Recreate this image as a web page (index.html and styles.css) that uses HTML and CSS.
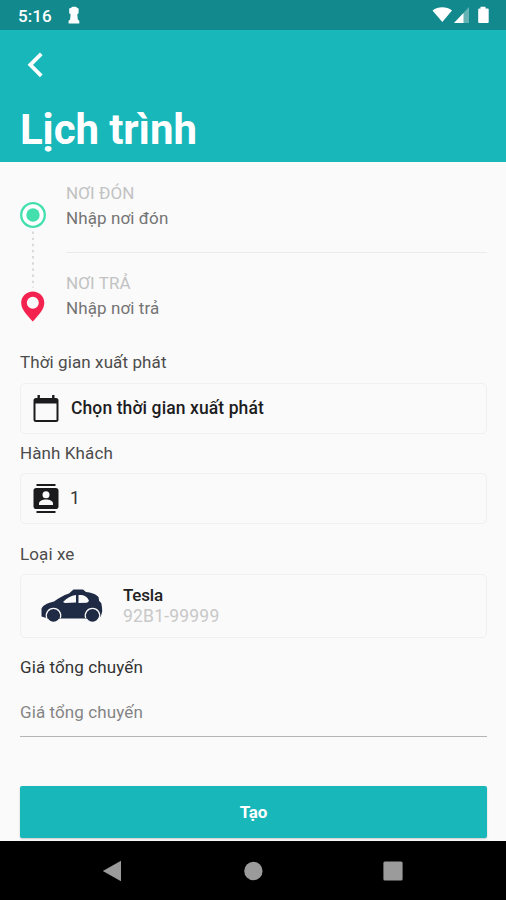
FILE: index.html
```html
<!DOCTYPE html>
<html lang="vi">
<head>
<meta charset="utf-8">
<title>Lịch trình</title>
<link rel="stylesheet" href="styles.css">
</head>
<body>
<div class="screen">
  <div class="status">
    <span class="clock">5:16</span>
    <svg class="keyhole" width="12" height="18" viewBox="0 0 12 18"><path fill="#fff" d="M4.200.8h3.800L9 1.800l1.600.7v4.700L9.300 8.300l.5 5.200 1.500 1.200v2.800H.6v-2.800l1.500-1.200.5-5.200L1.200 7.200V2.500l2-.7z"/></svg>
    <svg class="signals" width="58" height="18" viewBox="0 0 58 18">
      <path fill="#fff" d="M.5 4.500C6 .2 14.500.2 20 4.500L10.300 16z"/>
      <path fill="#fff" opacity=".35" d="M37 1v16H22z"/>
      <path fill="#fff" d="M31.500 7v10H22z"/>
      <path fill="#fff" d="M48.500.8h5v1.700h2.200q1 0 1 1V16q0 1-1 1h-8.500q-1 0-1-1V3.500q0-1 1-1h1.300z"/>
    </svg>
  </div>
  <header class="header">
    <svg class="back" width="16" height="26" viewBox="0 0 16 26"><path fill="none" stroke="#fff" stroke-width="3.800" d="M14.300 1.800 3.300 12.800l11 11"/></svg>
    <h1 class="title">Lịch trình</h1>
  </header>
  <main class="main">
    <section class="route">
      <div class="rail">
        <svg width="26" height="26" viewBox="0 0 26 26"><circle cx="13" cy="13" r="11.800" fill="#fff" stroke="#43dfad" stroke-width="2.300"/><circle cx="13" cy="13" r="6.700" fill="#43dfad"/></svg>
        <svg width="2" height="57" viewBox="0 0 2 57"><path stroke="#c9c9c9" stroke-width="1.300" stroke-dasharray="2.400 3.750" d="M1 .5v56"/></svg>
        <svg width="26" height="32" viewBox="0 0 26 32"><path fill="#f4224f" fill-rule="evenodd" d="M12.800.5C6.400.5 1.200 5.500 1.200 11.700 1.200 18.500 7 24 12.800 30.500 18.500 24 24.300 18.500 24.300 11.700 24.300 5.500 19.200.5 12.800.5zm0 5.300a6 6 0 1 1 0 12 6 6 0 0 1 0-12z"/></svg>
      </div>
      <div class="stops">
        <div class="stop"><div class="caption">NƠI ĐÓN</div><div class="place">Nhập nơi đón</div></div>
        <div class="stop"><div class="caption">NƠI TRẢ</div><div class="place">Nhập nơi trả</div></div>
      </div>
    </section>

    <div class="label label-time">Thời gian xuất phát</div>
    <div class="box">
      <svg width="26" height="29" viewBox="0 0 26 29"><path fill="#1b1b1d" fill-rule="evenodd" d="M4.500 1h2.400v3h12.200V1h2.400v3H23q2.500 0 2.500 2.500v19Q25.500 28 23 28H3Q.5 28 .5 25.500v-19Q.5 4 3 4h1.500zM2.500 9.500V26h21V9.500z"/></svg>
      <span class="value strong">Chọn thời gian xuất phát</span>
    </div>

    <div class="label label-guests">Hành Khách</div>
    <div class="box">
      <svg width="26" height="31" viewBox="0 0 26 31"><path stroke="#1b1b1d" stroke-width="2.200" d="M3.500 2h19M3.500 29h19"/><rect x=".5" y="5" width="25" height="21" rx="2.800" fill="#1b1b1d"/><circle cx="13" cy="11.700" r="3.500" fill="#fafafa"/><path fill="#fafafa" d="M6 22v-1.500c0-2.600 4-4 7-4s7 1.400 7 4V22z"/></svg>
      <span class="value count">1</span>
    </div>

    <div class="label label-car">Loại xe</div>
    <div class="box car">
      <svg width="64" height="36" viewBox="0 0 64 36"><path fill="#1f2a44" d="M1.500 20.500C3 17.500 6 15.500 14 13.500c5-3.500 9-6 15-8L33.500 1.500h9.500l3 2.500c5 .7 9 1.500 12.500 5l.7 4 2 2c.8 3 1 6 1 8.500l-1.400 5-4 2H8l-6.500-2z"/><path fill="#fafafa" d="M23 14c4-4 8-6.500 13-7v7.500l-11 .5zM38.500 7c5.500-.3 9 1.500 10.500 6l-2 1.700-8.500.3z"/><circle cx="13.500" cy="27.500" r="6.200" fill="#1f2a44"/><circle cx="52.500" cy="27.500" r="6.200" fill="#1f2a44"/><path fill="none" stroke="#fafafa" stroke-width="1.300" d="M6.700 30a7.200 7.200 0 1 1 13.600 0M45.700 30a7.200 7.200 0 1 1 13.600 0"/></svg>
      <div class="vehicle"><div class="model">Tesla</div><div class="plate">92B1-99999</div></div>
    </div>

    <div class="label label-price">Giá tổng chuyến</div>
    <div class="price">Giá tổng chuyến</div>
    <div class="submit">Tạo</div>
  </main>
  <nav class="nav">
    <svg width="20" height="22" viewBox="0 0 20 22"><path fill="#9b9b9b" d="M19 .8v20.500L.8 11z"/></svg>
    <svg width="20" height="20" viewBox="0 0 20 20"><circle cx="10.400" cy="10" r="9.200" fill="#9b9b9b"/></svg>
    <svg width="20" height="20" viewBox="0 0 20 20"><rect x=".4" y=".4" width="19.200" height="19.200" rx="1.500" fill="#9b9b9b"/></svg>
  </nav>
</div>
</body>
</html>
```
FILE: styles.css
```css
* { box-sizing: border-box; }
body { margin: 0; background: #fafafa; font-family: Roboto, "Noto Sans", sans-serif; font-size: 17px; letter-spacing: .1px; color: #444; }
svg { display: block; flex: none; }
.screen { width: 506px; height: 900px; display: flex; flex-direction: column; overflow: hidden; }
.status { height: 30px; background: #12898c; display: flex; align-items: center; padding: 0 16px 0 18px; }
.clock { color: #fff; font-weight: 500; font-size: 17px; line-height: 30px; padding-top: 2px; }
.keyhole { margin-left: 16px; }
.signals { margin-left: auto; }
.header { height: 132px; background: #18b7ba; padding: 22px 20px 0; }
.back { margin-left: 7px; }
.title { margin: 27px 0 0; color: #fff; font-size: 42px; line-height: 50px; font-weight: 700; letter-spacing: -.1px; }
.main { flex: 1; padding: 19px 19px 0 20px; }
.route { display: flex; height: 140px; }
.rail { width: 26px; padding-top: 21px; display: flex; flex-direction: column; align-items: center; gap: 3px; }
.stops { flex: 1; margin-left: 20px; }
.stop { line-height: 25px; }
.stop:first-child { height: 72px; border-bottom: 1px solid #ebebeb; margin-bottom: 18px; }
.caption { color: #c2c2c2; }
.place { color: #747474; }
.label { line-height: 24px; color: #4c4c4c; }
.label-time { margin: 29px 0 9px; }
.label-guests { margin: 7px 0 8px; }
.label-car { margin: 18px 0 8px; }
.label-price { margin: 17px 0 21px; color: #333; }
.box { height: 51px; border: 1px solid #f0f0f0; border-radius: 5px; display: flex; align-items: center; padding-left: 12px; }
.value { margin: -1px 0 0 12px; color: #333; }
.strong { font-weight: 500; font-size: 17.500px; color: #1d1d1f; }
.count { font-size: 17.500px; margin-left: 11px; }
.car { height: 64px; padding-left: 19px; }
.vehicle { margin-left: 19px; line-height: 21px; }
.model { color: #222; font-weight: 500; letter-spacing: -.2px; }
.plate { color: #c8c8c8; font-size: 17.500px; letter-spacing: .2px; }
.price { height: 37px; line-height: 24px; color: #858585; border-bottom: 1.500px solid #b5b5b5; }
.submit { margin-top: 49px; height: 52px; line-height: 52px; text-align: center; color: #fff; font-weight: 700; letter-spacing: -.1px; background: #18b7ba; border-radius: 2px; box-shadow: 0 1px 2px rgba(0, 0, 0, .2); }
.nav { height: 59px; background: #000; display: flex; align-items: center; justify-content: space-between; padding: 0 103px 0 102px; }
```
